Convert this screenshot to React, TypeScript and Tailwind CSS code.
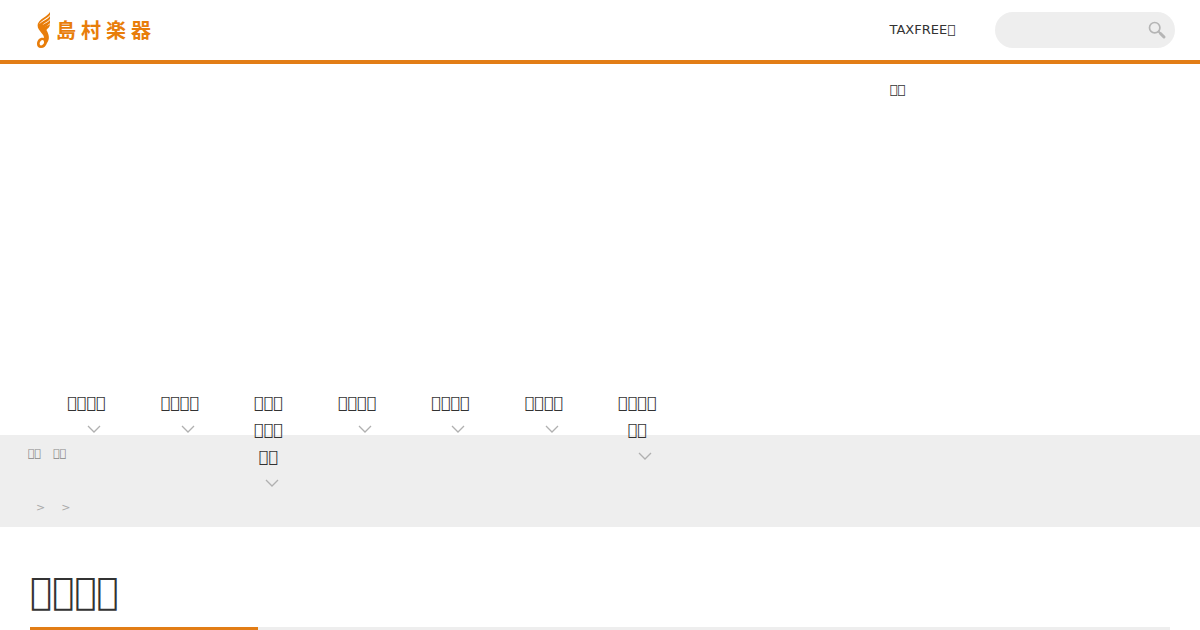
import React from "react";

type NavItem = {
  id: string;
  lines: number[];
};

// private use code point, drawn as the font's empty box
const BOX = "\uE000";

const NAV_ITEMS: NavItem[] = [
  { id: "nav-1", lines: [4] },
  { id: "nav-2", lines: [4] },
  { id: "nav-3", lines: [3, 3, 2] },
  { id: "nav-4", lines: [4] },
  { id: "nav-5", lines: [4] },
  { id: "nav-6", lines: [4] },
  { id: "nav-7", lines: [4, 2] },
];

const LOGO_TEXT = ["島", "村", "楽", "器"];

const Logo = () => (
  <a href="#" className="flex items-center gap-[6px] text-[#e87d0a]">
    <svg width="13" height="36" viewBox="0 0 13 36" fill="currentColor">
      {/* feathers */}
      <path d="M13 0v3C11 6 5 8 3 11l-2 1C2 7 10 5 13 0Z" />
      <path d="M13 4v3c-2 3-7 4-8 7l-3-1c2-4 9-5 11-9Z" />
      <path d="M13 8v3c-1 2-5 3-6 6l-3-2c1-3 7-4 9-7Z" />
      <path d="M13 12c0 4-3 4-4 7l-3-3c1-2 5-2 7-4Z" />
      {/* stem and note head */}
      <path
        fillRule="evenodd"
        d="M1 11c-1 3 0 6 2 8 2 3 4 4 4 7-4-1-7 2-7 6 0 2 1 4 4 4 3 0 5-2 6-5 3-4 2-8 0-12-2-3-4-5-5-7ZM5 28c-2 1-3 3-2 5 1 1 3 0 4-2 0-2 0-3-2-3Z"
      />
    </svg>
    <span className="flex gap-[5px] font-['Noto_Sans_CJK_JP',sans-serif] text-xl/6 font-bold">
      {LOGO_TEXT.map((char) => (
        <span key={char}>{char}</span>
      ))}
    </span>
  </a>
);

const SearchBox = () => (
  <form
    role="search"
    className="flex h-9 w-[180px] items-center rounded-full bg-[#eeeeee] pr-2 pl-4"
  >
    <input
      type="search"
      aria-label="Search"
      className="min-w-0 flex-1 bg-transparent text-[13px] outline-none"
    />
    <button type="submit" aria-label="Submit search">
      <svg
        width="20"
        height="20"
        viewBox="0 0 20 20"
        fill="none"
        stroke="#b5b5b5"
      >
        <circle cx="7.7" cy="7.7" r="5.2" strokeWidth="1.7" />
        <path d="M11.5 11.5l2 2" strokeWidth="2" />
        <path d="M13.5 13.5l3.5 3.5" strokeWidth="3" strokeLinecap="round" />
      </svg>
    </button>
  </form>
);

const Chevron = () => (
  <svg
    width="14"
    height="8"
    viewBox="0 0 14 8"
    fill="none"
    stroke="#b0b0b0"
    strokeWidth="1.3"
    className="mt-[9px] mr-1 self-end"
  >
    <path d="M1 1l6 6 6-6" />
  </svg>
);

const GlobalNav = () => (
  <nav className="relative z-10 mt-[325px] h-[46px] pl-[67px]">
    <ul className="flex gap-[55px]">
      {NAV_ITEMS.map((item) => (
        <li key={item.id}>
          <a href="#" className="flex flex-col items-center text-base/[27px]">
            {item.lines.map((count, i) => (
              <span key={i}>{BOX.repeat(count)}</span>
            ))}
            <Chevron />
          </a>
        </li>
      ))}
    </ul>
  </nav>
);

const Breadcrumbs = () => (
  <div className="bg-[#eeeeee] px-7 py-[10px] text-[#888888]">
    <ul className="flex gap-3 text-[11px]/[18px]">
      <li>{BOX.repeat(2)}</li>
      <li>{BOX.repeat(2)}</li>
    </ul>
    <ol className="mt-9 flex gap-4 pl-2 text-[11px]/[18px] text-[#aaaaaa]">
      <li>&gt;</li>
      <li>&gt;</li>
    </ol>
  </div>
);

const App: React.FC = () => {
  return (
    <div className="bg-white font-['DejaVu_Sans',sans-serif] text-[#333333]">
      <header>
        <div className="flex h-16 items-start justify-between border-b-4 border-[#e27d16] pr-[25px] pl-[37px]">
          <div className="flex h-[60px] items-center">
            <Logo />
          </div>
          <div className="flex gap-10">
            <a href="#" className="flex flex-col text-[13px]/[60px]">
              <span>TAXFREE{BOX}</span>
              <span>{BOX.repeat(2)}</span>
            </a>
            <div className="flex h-[60px] items-center">
              <SearchBox />
            </div>
          </div>
        </div>
        <GlobalNav />
      </header>
      <Breadcrumbs />
      <main className="px-[30px] pt-10">
        <h1 className="pb-[10px] text-[37px]/[50px]">{BOX.repeat(4)}</h1>
        <div className="flex h-[3px] bg-[#eeeeee]">
          <span className="w-1/5 bg-[#e27d16]" />
        </div>
      </main>
    </div>
  );
};

export default App;
